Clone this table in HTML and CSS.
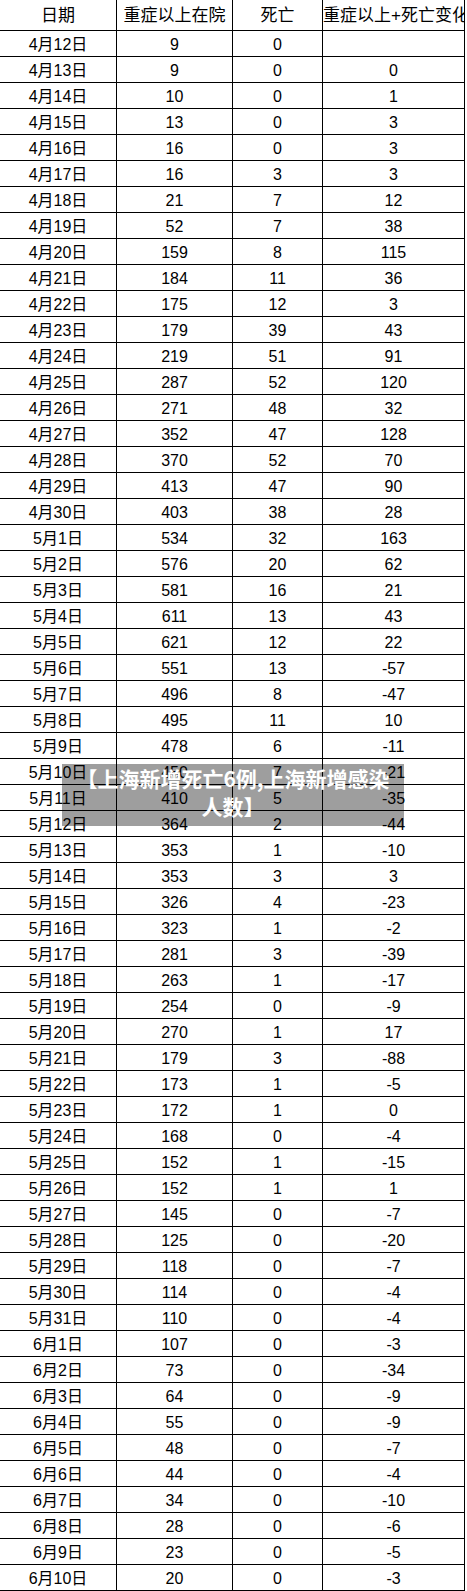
FILE: index.html
```html
<!DOCTYPE html>
<html lang="zh-CN">
<head>
<meta charset="utf-8">
<title>上海重症以上在院及死亡</title>
<link rel="stylesheet" href="styles.css">
</head>
<body>
<div class="page">
<div class="sheet" role="table">
<div class="row head" role="row"><div class="cell" role="columnheader">日期</div><div class="cell" role="columnheader">重症以上在院</div><div class="cell" role="columnheader">死亡</div><div class="cell" role="columnheader">重症以上+死亡变化</div></div>
<div class="row" role="row"><div class="cell">4月12日</div><div class="cell">9</div><div class="cell">0</div><div class="cell"></div></div>
<div class="row" role="row"><div class="cell">4月13日</div><div class="cell">9</div><div class="cell">0</div><div class="cell">0</div></div>
<div class="row" role="row"><div class="cell">4月14日</div><div class="cell">10</div><div class="cell">0</div><div class="cell">1</div></div>
<div class="row" role="row"><div class="cell">4月15日</div><div class="cell">13</div><div class="cell">0</div><div class="cell">3</div></div>
<div class="row" role="row"><div class="cell">4月16日</div><div class="cell">16</div><div class="cell">0</div><div class="cell">3</div></div>
<div class="row" role="row"><div class="cell">4月17日</div><div class="cell">16</div><div class="cell">3</div><div class="cell">3</div></div>
<div class="row" role="row"><div class="cell">4月18日</div><div class="cell">21</div><div class="cell">7</div><div class="cell">12</div></div>
<div class="row" role="row"><div class="cell">4月19日</div><div class="cell">52</div><div class="cell">7</div><div class="cell">38</div></div>
<div class="row" role="row"><div class="cell">4月20日</div><div class="cell">159</div><div class="cell">8</div><div class="cell">115</div></div>
<div class="row" role="row"><div class="cell">4月21日</div><div class="cell">184</div><div class="cell">11</div><div class="cell">36</div></div>
<div class="row" role="row"><div class="cell">4月22日</div><div class="cell">175</div><div class="cell">12</div><div class="cell">3</div></div>
<div class="row" role="row"><div class="cell">4月23日</div><div class="cell">179</div><div class="cell">39</div><div class="cell">43</div></div>
<div class="row" role="row"><div class="cell">4月24日</div><div class="cell">219</div><div class="cell">51</div><div class="cell">91</div></div>
<div class="row" role="row"><div class="cell">4月25日</div><div class="cell">287</div><div class="cell">52</div><div class="cell">120</div></div>
<div class="row" role="row"><div class="cell">4月26日</div><div class="cell">271</div><div class="cell">48</div><div class="cell">32</div></div>
<div class="row" role="row"><div class="cell">4月27日</div><div class="cell">352</div><div class="cell">47</div><div class="cell">128</div></div>
<div class="row" role="row"><div class="cell">4月28日</div><div class="cell">370</div><div class="cell">52</div><div class="cell">70</div></div>
<div class="row" role="row"><div class="cell">4月29日</div><div class="cell">413</div><div class="cell">47</div><div class="cell">90</div></div>
<div class="row" role="row"><div class="cell">4月30日</div><div class="cell">403</div><div class="cell">38</div><div class="cell">28</div></div>
<div class="row" role="row"><div class="cell">5月1日</div><div class="cell">534</div><div class="cell">32</div><div class="cell">163</div></div>
<div class="row" role="row"><div class="cell">5月2日</div><div class="cell">576</div><div class="cell">20</div><div class="cell">62</div></div>
<div class="row" role="row"><div class="cell">5月3日</div><div class="cell">581</div><div class="cell">16</div><div class="cell">21</div></div>
<div class="row" role="row"><div class="cell">5月4日</div><div class="cell">611</div><div class="cell">13</div><div class="cell">43</div></div>
<div class="row" role="row"><div class="cell">5月5日</div><div class="cell">621</div><div class="cell">12</div><div class="cell">22</div></div>
<div class="row" role="row"><div class="cell">5月6日</div><div class="cell">551</div><div class="cell">13</div><div class="cell">-57</div></div>
<div class="row" role="row"><div class="cell">5月7日</div><div class="cell">496</div><div class="cell">8</div><div class="cell">-47</div></div>
<div class="row" role="row"><div class="cell">5月8日</div><div class="cell">495</div><div class="cell">11</div><div class="cell">10</div></div>
<div class="row" role="row"><div class="cell">5月9日</div><div class="cell">478</div><div class="cell">6</div><div class="cell">-11</div></div>
<div class="row" role="row"><div class="cell">5月10日</div><div class="cell">450</div><div class="cell">7</div><div class="cell">-21</div></div>
<div class="row" role="row"><div class="cell">5月11日</div><div class="cell">410</div><div class="cell">5</div><div class="cell">-35</div></div>
<div class="row" role="row"><div class="cell">5月12日</div><div class="cell">364</div><div class="cell">2</div><div class="cell">-44</div></div>
<div class="row" role="row"><div class="cell">5月13日</div><div class="cell">353</div><div class="cell">1</div><div class="cell">-10</div></div>
<div class="row" role="row"><div class="cell">5月14日</div><div class="cell">353</div><div class="cell">3</div><div class="cell">3</div></div>
<div class="row" role="row"><div class="cell">5月15日</div><div class="cell">326</div><div class="cell">4</div><div class="cell">-23</div></div>
<div class="row" role="row"><div class="cell">5月16日</div><div class="cell">323</div><div class="cell">1</div><div class="cell">-2</div></div>
<div class="row" role="row"><div class="cell">5月17日</div><div class="cell">281</div><div class="cell">3</div><div class="cell">-39</div></div>
<div class="row" role="row"><div class="cell">5月18日</div><div class="cell">263</div><div class="cell">1</div><div class="cell">-17</div></div>
<div class="row" role="row"><div class="cell">5月19日</div><div class="cell">254</div><div class="cell">0</div><div class="cell">-9</div></div>
<div class="row" role="row"><div class="cell">5月20日</div><div class="cell">270</div><div class="cell">1</div><div class="cell">17</div></div>
<div class="row" role="row"><div class="cell">5月21日</div><div class="cell">179</div><div class="cell">3</div><div class="cell">-88</div></div>
<div class="row" role="row"><div class="cell">5月22日</div><div class="cell">173</div><div class="cell">1</div><div class="cell">-5</div></div>
<div class="row" role="row"><div class="cell">5月23日</div><div class="cell">172</div><div class="cell">1</div><div class="cell">0</div></div>
<div class="row" role="row"><div class="cell">5月24日</div><div class="cell">168</div><div class="cell">0</div><div class="cell">-4</div></div>
<div class="row" role="row"><div class="cell">5月25日</div><div class="cell">152</div><div class="cell">1</div><div class="cell">-15</div></div>
<div class="row" role="row"><div class="cell">5月26日</div><div class="cell">152</div><div class="cell">1</div><div class="cell">1</div></div>
<div class="row" role="row"><div class="cell">5月27日</div><div class="cell">145</div><div class="cell">0</div><div class="cell">-7</div></div>
<div class="row" role="row"><div class="cell">5月28日</div><div class="cell">125</div><div class="cell">0</div><div class="cell">-20</div></div>
<div class="row" role="row"><div class="cell">5月29日</div><div class="cell">118</div><div class="cell">0</div><div class="cell">-7</div></div>
<div class="row" role="row"><div class="cell">5月30日</div><div class="cell">114</div><div class="cell">0</div><div class="cell">-4</div></div>
<div class="row" role="row"><div class="cell">5月31日</div><div class="cell">110</div><div class="cell">0</div><div class="cell">-4</div></div>
<div class="row" role="row"><div class="cell">6月1日</div><div class="cell">107</div><div class="cell">0</div><div class="cell">-3</div></div>
<div class="row" role="row"><div class="cell">6月2日</div><div class="cell">73</div><div class="cell">0</div><div class="cell">-34</div></div>
<div class="row" role="row"><div class="cell">6月3日</div><div class="cell">64</div><div class="cell">0</div><div class="cell">-9</div></div>
<div class="row" role="row"><div class="cell">6月4日</div><div class="cell">55</div><div class="cell">0</div><div class="cell">-9</div></div>
<div class="row" role="row"><div class="cell">6月5日</div><div class="cell">48</div><div class="cell">0</div><div class="cell">-7</div></div>
<div class="row" role="row"><div class="cell">6月6日</div><div class="cell">44</div><div class="cell">0</div><div class="cell">-4</div></div>
<div class="row" role="row"><div class="cell">6月7日</div><div class="cell">34</div><div class="cell">0</div><div class="cell">-10</div></div>
<div class="row" role="row"><div class="cell">6月8日</div><div class="cell">28</div><div class="cell">0</div><div class="cell">-6</div></div>
<div class="row" role="row"><div class="cell">6月9日</div><div class="cell">23</div><div class="cell">0</div><div class="cell">-5</div></div>
<div class="row" role="row"><div class="cell">6月10日</div><div class="cell">20</div><div class="cell">0</div><div class="cell">-3</div></div>
</div>
<div class="banner">【上海新增死亡6例,上海新增感染人数】</div>
</div>
</body>
</html>
```

FILE: styles.css
```css
html, body {
  margin: 0;
  padding: 0;
  background: #fff;
}

.page {
  position: relative;
  width: 467px;
}

.sheet {
  display: flex;
  flex-direction: column;
  width: 465px;
  font-family: "Liberation Sans", "Noto Sans CJK SC", sans-serif;
  font-size: 16px;
  color: #000;
}

.row {
  display: grid;
  grid-template-columns: 117px 116px 90px 142px;
  height: 26px;
}

.row.head {
  height: 31px;
}

.cell {
  box-sizing: border-box;
  min-width: 0;
  border-right: 1px solid #000;
  border-bottom: 1px solid #000;
  padding-top: 2px;
  line-height: 23px;
  text-align: center;
  white-space: nowrap;
  overflow: hidden;
}

.head .cell {
  font-size: 17px;
  line-height: 28px;
}

.banner {
  position: absolute;
  left: 62px;
  top: 764px;
  width: 342px;
  height: 62px;
  box-sizing: border-box;
  padding: 0 12px 6px;
  display: flex;
  align-items: center;
  justify-content: center;
  text-align: center;
  background: rgba(0, 0, 0, 0.38);
  color: #fff;
  font-family: "Noto Sans CJK SC", sans-serif;
  font-weight: bold;
  font-size: 21px;
  line-height: 28px;
}
```
